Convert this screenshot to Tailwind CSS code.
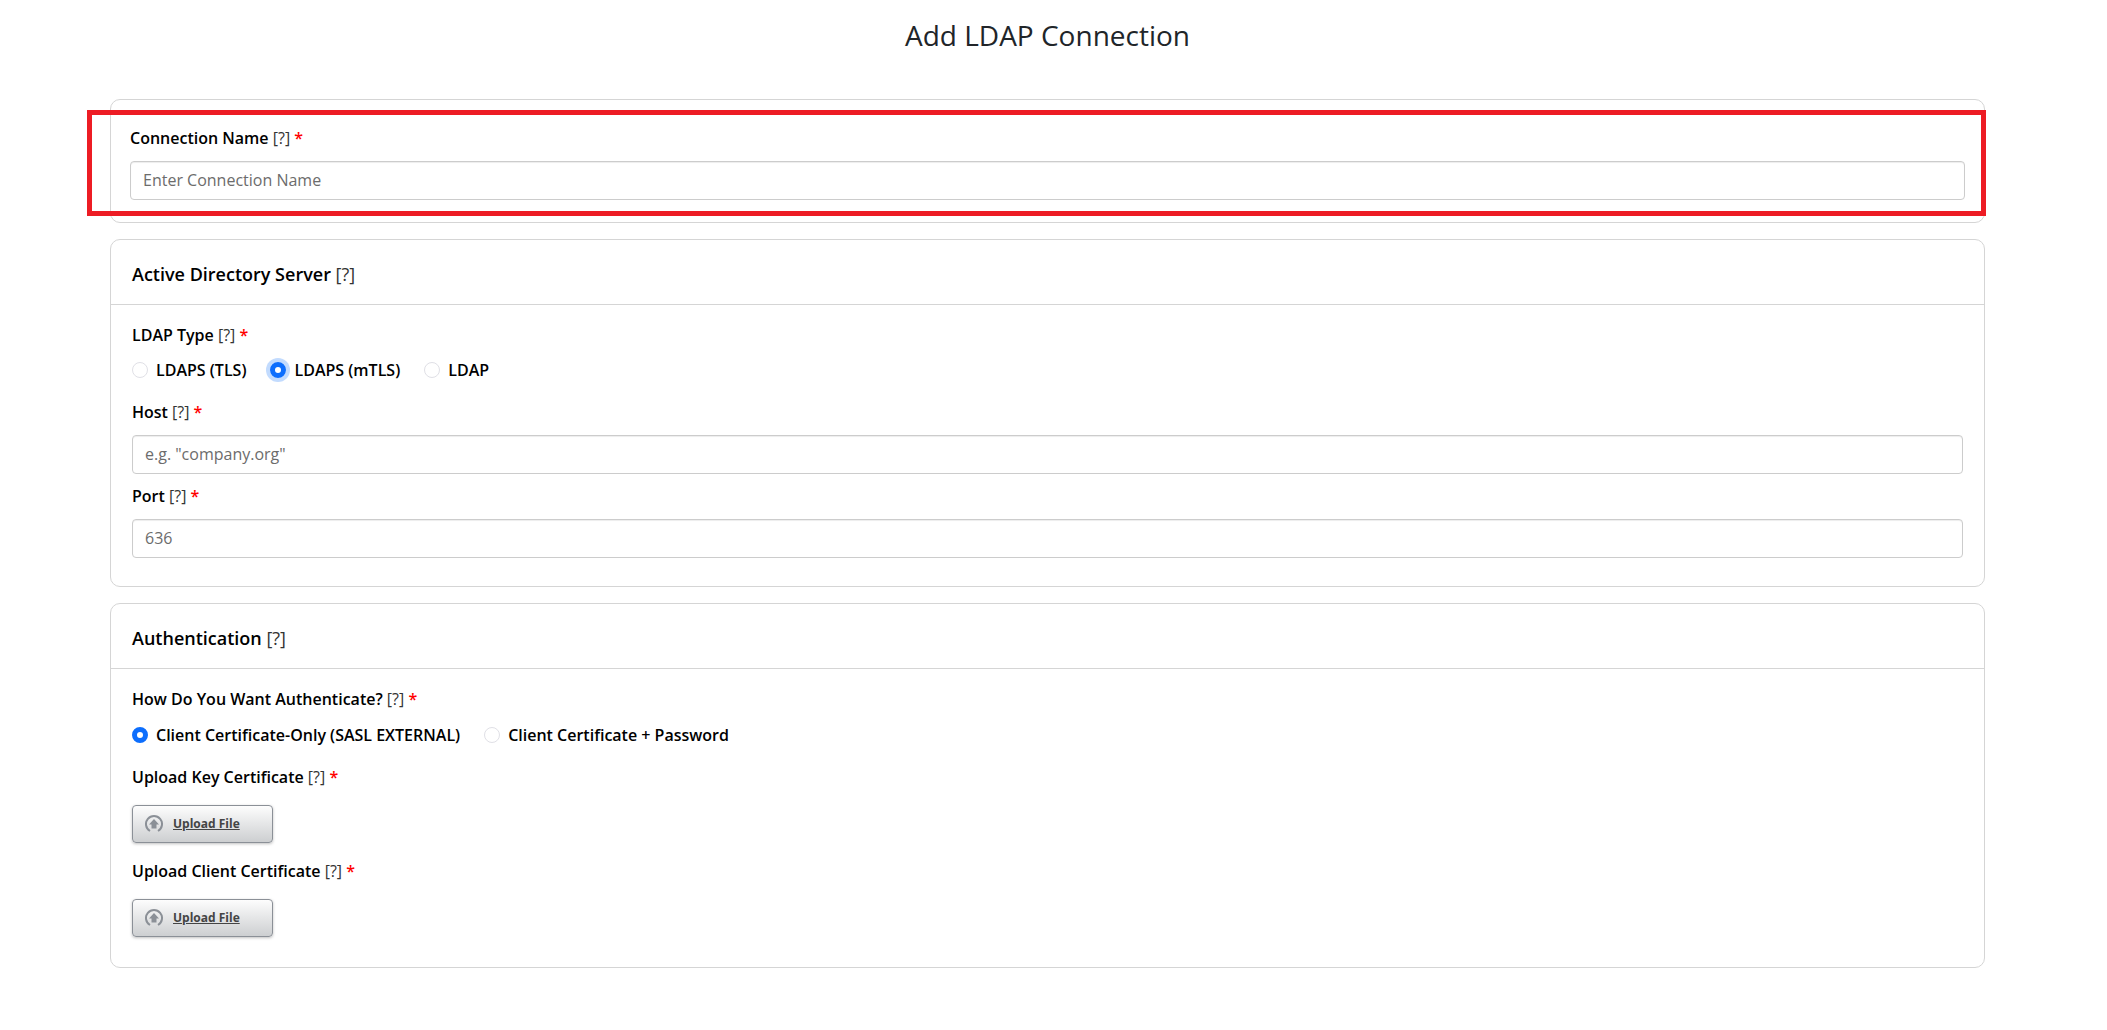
<!DOCTYPE html>
<html lang="en">
<head>
  <meta charset="UTF-8">
  <meta name="viewport" content="width=device-width, initial-scale=1.0">
  <title>Add LDAP Connection</title>
  <script src="https://cdn.jsdelivr.net/npm/@tailwindcss/browser@4"></script>
</head>
<body class="bg-white text-black text-base leading-6 font-['Open_Sans','Noto_Sans',sans-serif]">

  <main class="pl-[110px] pr-[122px] pt-[15px] pb-16">
    <h1 class="text-[28px] leading-10 text-center text-[#212529] mb-11">Add LDAP Connection</h1>

    <form class="flex flex-col gap-4">
      <!-- Connection name -->
      <section class="relative border border-[#d5d5d5] rounded-[10px] px-[19px] pt-[26px] pb-[22px]">
        <label for="connectionName" class="block font-semibold mb-[11px]">Connection Name <span class="font-normal text-[#333333]">[?]</span> <span class="text-[#ff0000]">*</span></label>
        <input id="connectionName" type="text" placeholder="Enter Connection Name" class="block w-full h-[39px] px-3 pb-[2px] border border-[#cccccc] rounded shadow-[inset_0_1px_1px_rgba(0,0,0,0.075)] placeholder:text-[#6c6c6c]">
        <div class="absolute -left-6 -right-[2px] top-[10px] bottom-[6px] border-5 border-[#ed1c24] pointer-events-none"></div>
      </section>

      <!-- Active Directory server -->
      <section class="border border-[#d5d5d5] rounded-[10px]">
        <h2 class="border-b border-[#d5d5d5] px-[21px] pt-[22px] pb-[18px] text-lg leading-6 font-semibold">Active Directory Server <span class="font-normal text-[#333333]">[?]</span></h2>
        <div class="px-[21px] pt-[18px] pb-7">
          <fieldset class="mb-[18px]">
            <legend class="font-semibold mb-[11px]">LDAP Type <span class="font-normal text-[#333333]">[?]</span> <span class="text-[#ff0000]">*</span></legend>
            <div class="flex flex-wrap gap-6 font-semibold">
              <label class="flex items-center gap-2"><input type="radio" name="ldapType" class="appearance-none size-4 rounded-full border border-[#e0e0e6] checked:border-5 checked:border-[#0d6efd]">LDAPS (TLS)</label>
              <label class="flex items-center gap-2"><input type="radio" name="ldapType" checked class="appearance-none size-4 rounded-full border border-[#e0e0e6] checked:border-5 checked:border-[#0d6efd] ring-4 ring-[#0d6efd]/25">LDAPS (mTLS)</label>
              <label class="flex items-center gap-2"><input type="radio" name="ldapType" class="appearance-none size-4 rounded-full border border-[#e0e0e6] checked:border-5 checked:border-[#0d6efd]">LDAP</label>
            </div>
          </fieldset>
          <label for="host" class="block font-semibold mb-[11px]">Host <span class="font-normal text-[#333333]">[?]</span> <span class="text-[#ff0000]">*</span></label>
          <input id="host" type="text" placeholder="e.g. &quot;company.org&quot;" class="block w-full h-[39px] px-3 pb-[2px] mb-[10px] border border-[#cccccc] rounded shadow-[inset_0_1px_1px_rgba(0,0,0,0.075)] placeholder:text-[#6c6c6c]">
          <label for="port" class="block font-semibold mb-[11px]">Port <span class="font-normal text-[#333333]">[?]</span> <span class="text-[#ff0000]">*</span></label>
          <input id="port" type="text" placeholder="636" class="block w-full h-[39px] px-3 pb-[2px] border border-[#cccccc] rounded shadow-[inset_0_1px_1px_rgba(0,0,0,0.075)] placeholder:text-[#6c6c6c]">
        </div>
      </section>

      <!-- Authentication -->
      <section class="border border-[#d5d5d5] rounded-[10px]">
        <h2 class="border-b border-[#d5d5d5] px-[21px] pt-[22px] pb-[18px] text-lg leading-6 font-semibold">Authentication <span class="font-normal text-[#333333]">[?]</span></h2>
        <div class="px-[21px] pt-[18px] pb-[30px]">
          <fieldset class="mb-[18px]">
            <legend class="font-semibold mb-3">How Do You Want Authenticate? <span class="font-normal text-[#333333]">[?]</span> <span class="text-[#ff0000]">*</span></legend>
            <div class="flex flex-wrap gap-6 font-semibold">
              <label class="flex items-center gap-2"><input type="radio" name="authType" checked class="appearance-none size-4 rounded-full border border-[#e0e0e6] checked:border-5 checked:border-[#0d6efd]">Client Certificate-Only (SASL EXTERNAL)</label>
              <label class="flex items-center gap-2"><input type="radio" name="authType" class="appearance-none size-4 rounded-full border border-[#e0e0e6] checked:border-5 checked:border-[#0d6efd]">Client Certificate + Password</label>
            </div>
          </fieldset>
          <label for="keyCertificate" class="block font-semibold mb-4">Upload Key Certificate <span class="font-normal text-[#333333]">[?]</span> <span class="text-[#ff0000]">*</span></label>
          <button id="keyCertificate" type="button" class="flex items-center gap-[10px] w-[141px] h-[38px] px-3 mb-4 border border-[#8b9097] rounded bg-linear-to-b from-[#fdfdfd] to-[#cdcfd1] shadow-[0_1px_3px_rgba(0,0,0,0.25)] text-xs font-bold text-[#444444] underline">
            <svg class="size-[18px]" viewBox="0 0 18 18" fill="none"><path d="M5 16A8 8 0 1 1 13 16" stroke="#8b9097" stroke-width="2"/><path d="M9 4l5 5.500h-2.500V13.500h-5V9.500H4z" fill="#8b9097"/></svg>
            Upload File
          </button>
          <label for="clientCertificate" class="block font-semibold mb-4">Upload Client Certificate <span class="font-normal text-[#333333]">[?]</span> <span class="text-[#ff0000]">*</span></label>
          <button id="clientCertificate" type="button" class="flex items-center gap-[10px] w-[141px] h-[38px] px-3 border border-[#8b9097] rounded bg-linear-to-b from-[#fdfdfd] to-[#cdcfd1] shadow-[0_1px_3px_rgba(0,0,0,0.25)] text-xs font-bold text-[#444444] underline">
            <svg class="size-[18px]" viewBox="0 0 18 18" fill="none"><path d="M5 16A8 8 0 1 1 13 16" stroke="#8b9097" stroke-width="2"/><path d="M9 4l5 5.500h-2.500V13.500h-5V9.500H4z" fill="#8b9097"/></svg>
            Upload File
          </button>
        </div>
      </section>
    </form>
  </main>
</body>
</html>
